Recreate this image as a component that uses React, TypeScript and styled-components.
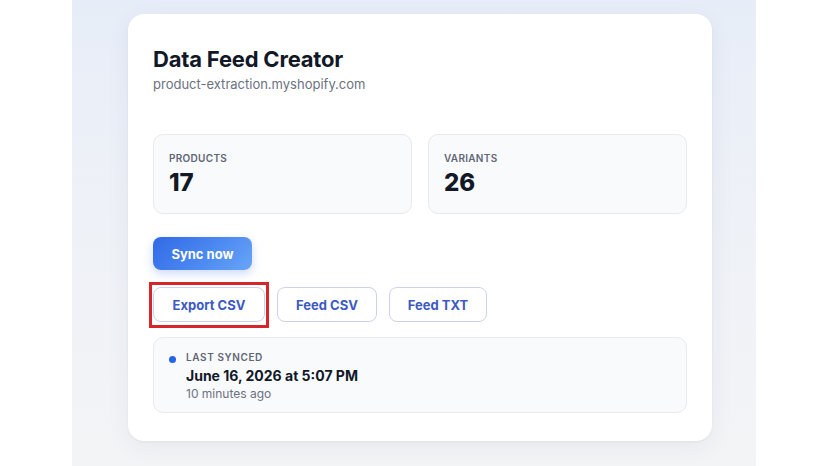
import React from "react";
import styled, { createGlobalStyle } from "styled-components";

const Global = createGlobalStyle`
  html, body { margin: 0; padding: 0; background: #ffffff; }
  body { font-family: "Inter", "Noto Sans", sans-serif; }
  * { box-sizing: border-box; }
`;

const Page = styled.div`
  width: 828px;
  height: 466px;
  display: flex;
  justify-content: center;
  background: #ffffff;
  overflow: hidden;
`;

const Backdrop = styled.div`
  width: 684px;
  height: 466px;
  padding: 14px 44px 0 56px;
  background: linear-gradient(180deg, #e7edf8 0%, #eef1f7 45%, #f3f4f6 100%);
`;

const Card = styled.div`
  width: 584px;
  height: 427px;
  background: #ffffff;
  border-radius: 16px;
  padding: 31px 25px 0 25px;
  box-shadow: 0 6px 24px rgba(30, 45, 90, 0.06), 0 1px 3px rgba(30, 45, 90, 0.05);
  display: flex;
  flex-direction: column;
`;

const Title = styled.h1`
  margin: 0;
  font-size: 22px;
  line-height: 28px;
  font-weight: 700;
  color: #111827;
  letter-spacing: -0.2px;
`;

const Subtitle = styled.div`
  margin-top: 3px;
  font-size: 13px;
  line-height: 16px;
  color: #6b7280;
`;

const Stats = styled.div`
  margin-top: 42px;
  display: grid;
  grid-template-columns: 1fr 1fr;
  gap: 16px;
  width: 534px;
`;

const StatCard = styled.div`
  height: 80px;
  border: 1px solid #e7e9ef;
  border-radius: 10px;
  background: #f9fafc;
  padding: 17px 15px 0 15px;
`;

const StatLabel = styled.div`
  font-size: 10px;
  line-height: 12px;
  font-weight: 600;
  letter-spacing: 0.3px;
  color: #5f6675;
  text-transform: uppercase;
`;

const StatValue = styled.div`
  margin-top: 4px;
  font-size: 24px;
  line-height: 29px;
  font-weight: 800;
  color: #111827;
`;

const SyncButton = styled.button`
  margin-top: 23px;
  align-self: flex-start;
  width: 99px;
  height: 33px;
  border: none;
  border-radius: 8px;
  background: linear-gradient(135deg, #3169e6 0%, #4f8cf2 60%, #69a6f7 100%);
  color: #ffffff;
  font-family: inherit;
  font-size: 13px;
  font-weight: 700;
  box-shadow: 0 4px 10px rgba(59, 110, 230, 0.25);
`;

const ExportRow = styled.div`
  margin-top: 17px;
  display: flex;
  gap: 12px;
`;

const Highlight = styled.div`
  position: relative;
  display: flex;
`;

const HighlightFrame = styled.div`
  position: absolute;
  left: -4px;
  top: -5px;
  right: -4px;
  bottom: -6px;
  border: 3px solid #d6262a;
  pointer-events: none;
`;

const OutlineButton = styled.button<{ $w: number }>`
  width: ${(p) => p.$w}px;
  height: 35px;
  border: 1px solid #c9d4ea;
  border-radius: 8px;
  background: #ffffff;
  color: #3d5ac4;
  font-family: inherit;
  font-size: 13px;
  font-weight: 700;
`;

const SyncBox = styled.div`
  margin-top: 15px;
  width: 534px;
  height: 76px;
  border: 1px solid #e7e9ef;
  border-radius: 10px;
  background: #f9fafc;
  padding: 13px 15px 0 15px;
  display: flex;
  gap: 10px;
`;

const Dot = styled.div`
  width: 7px;
  height: 7px;
  border-radius: 50%;
  background: #2563eb;
  margin-top: 5px;
  flex-shrink: 0;
`;

const SyncInfo = styled.div`
  display: flex;
  flex-direction: column;
`;

const SyncLabel = styled.div`
  font-size: 10px;
  line-height: 12px;
  font-weight: 600;
  letter-spacing: 0.6px;
  color: #5f6675;
`;

const SyncDate = styled.div`
  margin-top: 4px;
  font-size: 14px;
  line-height: 18px;
  font-weight: 700;
  color: #111827;
`;

const SyncAgo = styled.div`
  margin-top: 1px;
  font-size: 12px;
  line-height: 15px;
  color: #6b7280;
`;

export default function App() {
  return (
    <>
      <Global />
      <Page>
        <Backdrop>
          <Card>
            <Title>Data Feed Creator</Title>
            <Subtitle>product-extraction.myshopify.com</Subtitle>
            <Stats>
              <StatCard>
                <StatLabel>Products</StatLabel>
                <StatValue>17</StatValue>
              </StatCard>
              <StatCard>
                <StatLabel>Variants</StatLabel>
                <StatValue>26</StatValue>
              </StatCard>
            </Stats>
            <SyncButton>Sync now</SyncButton>
            <ExportRow>
              <Highlight>
                <OutlineButton $w={112}>Export CSV</OutlineButton>
                <HighlightFrame />
              </Highlight>
              <OutlineButton $w={100}>Feed CSV</OutlineButton>
              <OutlineButton $w={98}>Feed TXT</OutlineButton>
            </ExportRow>
            <SyncBox>
              <Dot />
              <SyncInfo>
                <SyncLabel>LAST SYNCED</SyncLabel>
                <SyncDate>June 16, 2026 at 5:07 PM</SyncDate>
                <SyncAgo>10 minutes ago</SyncAgo>
              </SyncInfo>
            </SyncBox>
          </Card>
        </Backdrop>
      </Page>
    </>
  );
}
